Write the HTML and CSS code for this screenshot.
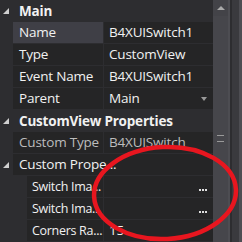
FILE: index.html
```html
<!DOCTYPE html>
<html>
<head>
<meta charset="utf-8">
<link rel="stylesheet" href="styles.css">
</head>
<body>
<div class="frame">
  <div class="grid">
    <div class="row cat"><span class="tri"></span><span class="label">Main</span></div>
    <div class="row"><span class="gut"></span><span class="name sel">Name</span><span class="val">B4XUISwitch1</span></div>
    <div class="row"><span class="gut"></span><span class="name">Type</span><span class="val">CustomView</span></div>
    <div class="row"><span class="gut"></span><span class="name">Event Name</span><span class="val">B4XUISwitch1</span></div>
    <div class="row"><span class="gut"></span><span class="name">Parent</span><span class="val dd">Main<span class="caret"></span></span></div>
    <div class="row cat"><span class="tri"></span><span class="label">CustomView Properties</span></div>
    <div class="row"><span class="gut"></span><span class="name dim">Custom Type</span><span class="val dim">B4XUISwitch</span></div>
    <div class="row"><span class="gut tg"><span class="tri sm"></span></span><span class="name wide">Custom Prope...</span></div>
    <div class="row"><span class="gut sub"></span><span class="name sn">Switch Ima...</span><span class="val dd"><span></span><span class="dots"><i></i><i></i><i></i></span></span></div>
    <div class="row"><span class="gut sub"></span><span class="name sn">Switch Ima...</span><span class="val dd"><span></span><span class="dots"><i></i><i></i><i></i></span></span></div>
    <div class="row"><span class="gut sub"></span><span class="name sn">Corners Ra...</span><span class="val">15</span></div>
  </div>
  <div class="scroll">
    <div class="up"><span class="uparrow"></span></div>
    <div class="thumb"><span class="grip"></span></div>
  </div>
  <div class="strip"><span class="s1"></span><span class="s2"></span><span class="s3"></span><span class="s4"></span></div>
  <svg class="mark" width="242" height="242" viewBox="0 0 242 242">
    <ellipse cx="165" cy="193" rx="71" ry="46" fill="none" stroke="#e8161f" stroke-width="4.5" transform="rotate(-3 165 193)"/>
  </svg>
</div>
</body>
</html>
```
FILE: styles.css
```css
html, body { margin: 0; padding: 0; background: #252526; }
body { font-family: "Open Sans", "Noto Sans", sans-serif; font-size: 13.5px; color: #f1f1f1; }
.frame { position: relative; width: 242px; height: 242px; overflow: hidden; display: flex; }
.grid { width: 213px; display: flex; flex-direction: column; gap: 1px; background: #2d2d30; }
.row { height: 21px; display: flex; align-items: center; flex: none; }
.cat { background: #2d2d30; font-weight: 700; }
.cat .label { padding-left: 6px; white-space: nowrap; letter-spacing: -0.2px; }
.tri { width: 13px; height: 21px; flex: none; position: relative; }
.tri::before { content: ""; position: absolute; left: 3px; top: 8px; border-style: solid; border-width: 0 0 6px 6px; border-color: transparent transparent #d0d0d0 transparent; }
.gut { width: 13px; height: 21px; flex: none; background: #2d2d30; }
.gut.sub { width: 27px; }
.gut.tg { position: relative; }
.tri.sm { display: block; }
.name { width: 84px; height: 21px; line-height: 21px; padding-left: 6px; background: #252526; white-space: nowrap; overflow: hidden; flex: none; margin-right: 1px; letter-spacing: -0.2px; }
.name.sn { width: 71px; padding-left: 5px; font-size: 12.5px; letter-spacing: -0.3px; }
.name.sel { background: #3f3f46; }
.name.wide { width: 194px; margin-right: 0; }
.dim { color: #bcbcbc; }
.val { flex: 1; height: 21px; line-height: 21px; padding-left: 5px; background: #252526; white-space: nowrap; overflow: hidden; letter-spacing: -0.2px; }
.dd { display: flex; justify-content: space-between; align-items: center; padding-right: 6px; }
.caret { width: 0; height: 0; border-style: solid; border-width: 4px 3.5px 0 3.5px; border-color: #999 transparent transparent transparent; }
.dots { display: flex; gap: 1px; align-items: flex-end; height: 8px; }
.dots i { width: 2px; height: 2px; background: #e0e0e0; display: block; }
.scroll { width: 15px; background: #3e3e42; display: flex; flex-direction: column; flex: none; }
.up { height: 16px; display: flex; justify-content: center; align-items: center; background: #434348; }
.uparrow { width: 0; height: 0; border-style: solid; border-width: 0 4px 4px 4px; border-color: transparent transparent #aaa transparent; }
.thumb { flex: 1; display: flex; justify-content: center; padding-top: 119px; background: #46464b; }
.grip { width: 7px; height: 5px; border-top: 1px solid #999; border-bottom: 1px solid #999; position: relative; }
.strip { width: 14px; display: flex; flex: none; }
.strip .s1 { width: 2px; background: #4d4d52; }
.strip .s2 { width: 2px; background: #2d2d30; }
.strip .s3 { width: 7px; background: #3a3a3e; }
.strip .s4 { width: 3px; background: #4d4d52; }
.mark { position: absolute; left: 0; top: 0; pointer-events: none; }
```
